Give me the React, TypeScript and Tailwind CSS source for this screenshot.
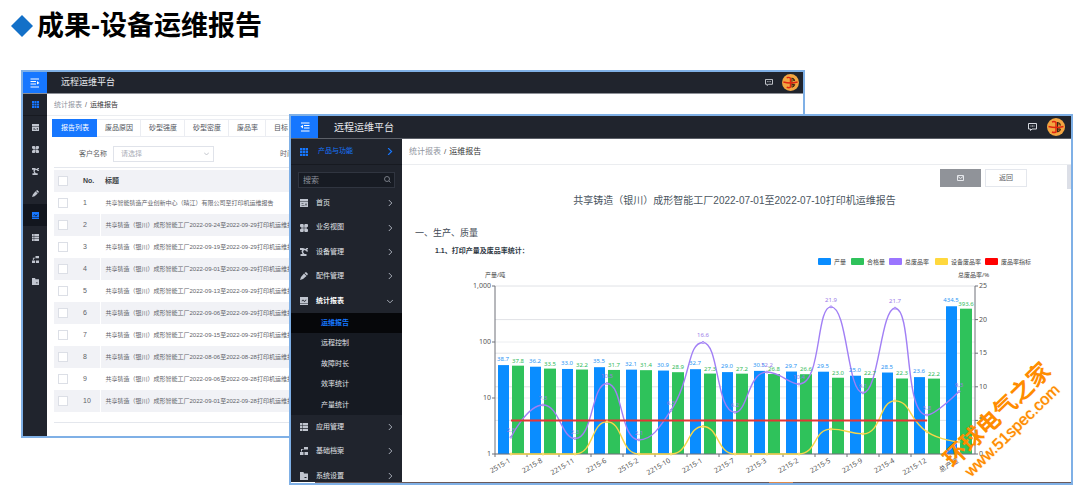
import React from 'react';

type IconName = 'apps' | 'home' | 'petals' | 'robot' | 'pencil' | 'report' | 'table' | 'blocks' | 'folder';

const Icon: React.FC<{ name: IconName; className?: string }> = ({ name, className }) => (
  <svg viewBox="0 0 16 16" fill="currentColor" className={className} aria-hidden="true">
    {name === 'apps' && (
      <path d="M0 0h4.6v4.6H0zM5.6 0h4.6v4.6H5.6zM11.3 0H16v4.6h-4.7zM0 5.6h4.6v4.6H0zM5.6 5.6h4.6v4.6H5.6zM11.3 5.6H16v4.6h-4.7zM0 11.3h4.6V16H0zM5.6 11.3h4.6V16H5.6zM11.3 11.3H16V16h-4.7z" />
    )}
    {name === 'home' && (
      <path fillRule="evenodd" d="M0 0h16v5H0zM0 6h16v10H0zM3 9v1h4V9zM3 12v1h6v-1zM11 9v4h2V9z" />
    )}
    {name === 'petals' && (
      <path d="M1 0h5l1.500 1.500v6H3L0 5V2zM10 0h5l1 2v3l-3 2.500H8.500v-6zM3 8.500h4.500v6L6 16H1l-1-2v-3zM8.500 8.500H13l3 2.500v3l-1 2h-5l-1.500-1.500z" />
    )}
    {name === 'robot' && (
      <path d="M0 0h6l5 2 2-2h3v2l-3 2 3 1v2h-3l-2-2-3-1-2 4 3 4h4v4H1v-4h4L3 7l1-3H0z" />
    )}
    {name === 'pencil' && <path d="M12 0l4 4-2 3-5-5zM8 3l5 5-7 6-6 2 2-6z" />}
    {name === 'report' && (
      <path fillRule="evenodd" d="M0 0h16v12H0zM0 13h16v3H0zM3 8l3-3 3 3 3-3 1 1-4 4-3-3-2 2z" />
    )}
    {name === 'table' && (
      <path d="M0 0h4v4.600H0zM5 0h11v4.600H5zM0 5.600h4v4.600H0zM5 5.600h11v4.600H5zM0 11.300h4V16H0zM5 11.300h11V16H5z" />
    )}
    {name === 'blocks' && <path d="M8 0h8v5H8zM2 4h5v1.500H4V9H2zM0 10h7v6H0zM9 10h7v6H9z" />}
    {name === 'folder' && <path fillRule="evenodd" d="M0 0h7l1 3h8v13H0zM9 10v2h4v-2z" />}
  </svg>
);

const FoldIcon: React.FC<{ open?: boolean }> = ({ open }) => (
  <svg viewBox="0 0 20 20" className="h-[10px] w-[10px]" fill="none" stroke="white" strokeWidth="2" aria-hidden="true">
    <path d={open ? 'M2 2h17M8 7h11M8 12h11M2 18h17' : 'M1 2h17M1 7h11M1 12h11M1 18h17'} />
    <path d={open ? 'M6 6v7L1 9z' : 'M14 6v7l5-3z'} fill="white" stroke="none" />
  </svg>
);

const MessageIcon: React.FC<{ className: string }> = ({ className }) => (
  <svg viewBox="0 0 18 16" className={className} fill="none" stroke="#d5d8de" strokeWidth="2" aria-hidden="true">
    <path d="M1 1h16v11H8l-3 3v-3H1z" />
    <path d="M5 6h2M8 6h2M11 6h2" />
  </svg>
);

const Avatar: React.FC<{ className: string }> = ({ className }) => (
  <svg viewBox="0 0 36 36" className={className} fill="none" role="img" aria-label="用户头像">
    <circle cx="18" cy="18" r="18" fill="#f2a541" />
    <path d="M21 8v20M21 9q6 0 6 6M24 10v5M21 22h6q0 5-6 6M24 21v5" stroke="#3d2412" strokeWidth="2" />
    <path d="M10 8q5-2 8 1v19q-4 2-8 0M3 17q15 4 30 0" stroke="#e0260f" strokeWidth="3" />
  </svg>
);

const Chevron: React.FC<{ down?: boolean; className: string }> = ({ down, className }) => (
  <svg viewBox="0 0 10 10" className={className} fill="none" stroke="currentColor" strokeWidth="1.6" aria-hidden="true">
    <path d={down ? 'M0 3l5 5 5-5' : 'M3 0l5 5-5 5'} />
  </svg>
);

const railIcons: IconName[] = ['home', 'petals', 'robot', 'pencil', 'report', 'table', 'blocks', 'folder'];

const tabs = ['报告列表', '废品原因', '砂型强度', '砂型密度', '废品率', '目标'];

const reports = [
  '共享智能铸造产业创新中心（晴江）有限公司至打印机运维报告',
  '共享铸造（银川）成形智能工厂2022-09-24至2022-09-29打印机运维报告',
  '共享铸造（银川）成形智能工厂2022-09-19至2022-09-29打印机运维报告',
  '共享铸造（银川）成形智能工厂2022-09-01至2022-09-29打印机运维报告',
  '共享铸造（银川）成形智能工厂2022-09-13至2022-09-29打印机运维报告',
  '共享铸造（银川）成形智能工厂2022-09-06至2022-09-29打印机运维报告',
  '共享铸造（银川）成形智能工厂2022-09-15至2022-09-29打印机运维报告',
  '共享铸造（银川）成形智能工厂2022-08-06至2022-08-28打印机运维报告',
  '共享铸造（银川）成形智能工厂2022-09-06至2022-09-28打印机运维报告',
  '共享铸造（银川）成形智能工厂2022-09-01至2022-09-28打印机运维报告',
];

const checkboxClass = 'block h-[10px] w-[10px] appearance-none border border-[#dcdfe6] bg-white';

const ListWindow: React.FC = () => (
  <section className="ml-[21px] mr-[275px] overflow-hidden border-2 border-[#7fb0e6] bg-white">
    <header className="flex h-[22px] items-center border-b border-[#8d9097] bg-[#20242d]">
      <button type="button" aria-label="展开菜单" className="flex h-full w-6 items-center justify-center bg-[#1677ff]">
        <FoldIcon />
      </button>
      <span className="ml-[14px] flex-1 text-[9px] text-[#e6e8ec]">远程运维平台</span>
      <MessageIcon className="mr-[9px] h-[7px] w-2" />
      <Avatar className="mr-1 h-[17px] w-[17px]" />
    </header>
    <div className="flex">
      <nav className="flex w-6 shrink-0 flex-col bg-[#20242d] text-[#c0c5cf]">
        <a href="#apps" aria-label="产品与功能" className="flex h-[22px] items-center justify-center border-b border-[#171a21] text-[#1677ff]">
          <Icon name="apps" className="h-[7px] w-[7px]" />
        </a>
        {railIcons.map((name) => (
          <a
            key={name}
            href={`#${name}`}
            aria-label={name}
            className={`flex h-[22px] items-center justify-center ${name === 'report' ? 'bg-[#12161e] text-[#1677ff]' : ''}`}
          >
            <Icon name={name} className="h-[7px] w-[7px]" />
          </a>
        ))}
      </nav>
      <main className="min-w-0 flex-1 pb-[13px]">
        <div className="flex h-[22px] items-center gap-[3px] border-b border-[#ebedf0] pl-[7px] pt-[2px] text-[7px]">
          <a href="#stats" className="text-[#8f949e]">统计报表</a>
          <span className="text-[#555]">/</span>
          <span className="text-[#333]">运维报告</span>
        </div>
        <div className="ml-[5px] mt-[3px] flex">
          {tabs.map((tab, i) => (
            <button
              key={tab}
              type="button"
              className={`h-[18px] shrink-0 border pl-2 pr-[7px] text-[7px] ${
                i === 0 ? 'border-[#1677ff] bg-[#1677ff] text-white' : 'border-l-0 border-[#ebedf2] text-[#50545c]'
              }`}
            >
              {tab}
            </button>
          ))}
        </div>
        <form className="ml-[7px] flex h-[31px] items-center border-b border-[#e4e7ed] pl-[25px] pt-1 text-[7px] text-[#606266]">
          <label htmlFor="customer">客户名称</label>
          <div className="relative ml-[6px]">
            <select id="customer" className="block h-4 w-[101px] appearance-none border border-[#e0e3ea] bg-white px-[7px] text-[7px] text-[#a9adb6]">
              <option>请选择</option>
            </select>
            <Chevron down className="absolute right-[5px] top-[5px] h-[5px] w-[5px] text-[#b4b8c0]" />
          </div>
          <span className="ml-[66px]">时间</span>
        </form>
        <div className="ml-[7px] border-b border-[#e4e7ed] pb-[10px] pt-[2px]">
          <table className="w-full table-fixed border-collapse text-left text-[6px] text-[#5f6369]">
            <thead>
              <tr className="h-[22px] bg-[#f1f2f6] text-[7px] text-[#3c3f45]">
                <th className="w-[29px] p-0 pl-1">
                  <input type="checkbox" aria-label="全选" className={checkboxClass} />
                </th>
                <th className="w-[17px] p-0">No.</th>
                <th className="p-0 pl-[5px]">标题</th>
              </tr>
            </thead>
            <tbody>
              {reports.map((title, i) => (
                <tr key={title} className="h-[22px] even:bg-[#f1f2f6]">
                  <td className="p-0 pl-1">
                    <input type="checkbox" aria-label={`选择第${i + 1}行`} className={checkboxClass} />
                  </td>
                  <td className="border-r border-white p-0 text-[7px]">{i + 1}</td>
                  <td className="whitespace-nowrap p-0 pl-[5px]">{title}</td>
                </tr>
              ))}
            </tbody>
          </table>
        </div>
      </main>
    </div>
  </section>
);

const topMenu: { icon: IconName; label: string; open?: boolean }[] = [
  { icon: 'home', label: '首页' },
  { icon: 'petals', label: '业务视图' },
  { icon: 'robot', label: '设备管理' },
  { icon: 'pencil', label: '配件管理' },
  { icon: 'report', label: '统计报表', open: true },
];

const subMenu = ['运维报告', '远程控制', '故障时长', '效率统计', '产量统计'];

const bottomMenu: { icon: IconName; label: string; open?: boolean }[] = [
  { icon: 'table', label: '应用管理' },
  { icon: 'blocks', label: '基础档案' },
  { icon: 'folder', label: '系统设置' },
];

const MenuItem: React.FC<{ icon: IconName; label: string; open?: boolean }> = ({ icon, label, open }) => (
  <a href={`#${icon}`} className={`flex items-center pl-[9px] pr-[9px] ${open ? 'font-bold text-white' : ''}`}>
    <Icon name={icon} className="mr-2 h-2 w-2 text-[#c0c5cf]" />
    <span className="flex-1">{label}</span>
    <Chevron down={open} className="h-[6px] w-[6px] text-[#aeb3bd]" />
  </a>
);

const Sidebar: React.FC = () => (
  <aside className="h-0 min-h-full overflow-hidden bg-[#20242d] text-[7px] text-[#e2e4e9]">
    <a href="#apps" className="flex h-[26px] items-center border-b border-[#171a21] pl-[9px] pr-[9px] text-[#1677ff]">
      <Icon name="apps" className="mr-[10px] h-2 w-2" />
      <span className="flex-1">产品与功能</span>
      <Chevron className="h-[7px] w-[7px]" />
    </a>
    <div className="relative mx-[7px] mb-[3px] mt-[7px]">
      <input
        type="search"
        aria-label="搜索"
        placeholder="搜索"
        className="block h-4 w-full border border-[#303540] bg-[#171b23] px-1 text-[8px] placeholder:text-[#8d929c]"
      />
      <svg viewBox="0 0 14 14" className="absolute right-1 top-1 h-[7px] w-[7px]" fill="none" stroke="#8d929c" strokeWidth="1.6" aria-hidden="true">
        <circle cx="6" cy="6" r="5" />
        <path d="M10 10l3 3" />
      </svg>
    </div>
    <div className="grid h-[122px] auto-rows-fr">
      {topMenu.map((item) => (
        <MenuItem key={item.label} {...item} />
      ))}
    </div>
    <div className="grid h-[102px] auto-rows-fr bg-[#161a22]">
      {subMenu.map((label, i) => (
        <a
          key={label}
          href={`#sub-${i}`}
          className={`flex items-center pl-[30px] ${i === 0 ? 'bg-[#06070a] font-bold text-[#1677ff]' : ''}`}
        >
          {label}
        </a>
      ))}
    </div>
    <div className="grid h-[73px] auto-rows-fr">
      {bottomMenu.map((item) => (
        <MenuItem key={item.label} {...item} />
      ))}
    </div>
  </aside>
);

const machines = [
  '2515-1', '2215-8', '2215-11', '2215-6', '2515-2', '2215-10', '2215-1', '2215-7',
  '2215-3', '2215-2', '2215-5', '2215-9', '2215-4', '2215-12', '总产量',
];
const output = [38.7, 36.2, 33.0, 35.5, 32.1, 30.9, 32.7, 29.0, 30.5, 29.7, 29.5, 25.0, 28.5, 23.6, 434.5];
const qualified = [37.8, 33.5, 32.2, 31.7, 31.4, 28.9, 27.3, 27.2, 26.8, 26.6, 23.0, 22.7, 22.3, 22.2, 393.6];
const scrapRate = [2.5, 7.3, 2.3, 10.5, 2.1, 6.5, 16.6, 6.2, 12.2, 10.4, 21.9, 9.1, 21.7, 5.8, 9.3];
const deviceScrap = [0, 0, 0, 4.8, 0, 0, 4.1, 0, 0, 0, 3.7, 3.0, 7.9, 3.3, 1.8];

const LEFT = 93;
const RIGHT = 573;
const TOP = 32;
const BOTTOM = 200;
const STEP = (RIGHT - LEFT) / machines.length;

const logY = (v: number) => BOTTOM - (Math.log10(v) * (BOTTOM - TOP)) / 3;
const rateY = (v: number) => BOTTOM - (v * (BOTTOM - TOP)) / 25;
const centerX = (i: number) => LEFT + STEP * (i + 0.5);

const clamp = (v: number, a: number, b: number) => Math.max(Math.min(a, b), Math.min(Math.max(a, b), v));

// Smoothed line; control points never leave the box of their segment.
const smoothPath = (values: number[]) => {
  const pts = values.map((v, i) => [centerX(i), rateY(v)]);
  let out = pts[0];
  let d = `M${pts[0].join(' ')}`;
  for (let i = 1; i < pts.length; i++) {
    const prev = pts[i - 1];
    const cur = pts[i];
    const next = pts[i + 1];
    let inn = cur;
    let nextOut = cur;
    if (next) {
      const lp = Math.hypot(cur[0] - prev[0], cur[1] - prev[1]);
      const ln = Math.hypot(next[0] - cur[0], next[1] - cur[1]);
      const ratio = ln / (ln + lp);
      nextOut = [0, 1].map((k) => clamp(cur[k] + (next[k] - prev[k]) * 0.5 * ratio, next[k], cur[k]));
      inn = [0, 1].map((k) => clamp(cur[k] - ((nextOut[k] - cur[k]) * lp) / ln, prev[k], cur[k]));
      nextOut = [0, 1].map((k) => cur[k] + ((cur[k] - inn[k]) * ln) / lp);
    }
    d += `C${out.join(' ')} ${inn.join(' ')} ${cur.join(' ')}`;
    out = nextOut;
  }
  return d;
};

const legend = [
  { label: '产量', color: '#0a8dff', x: 417 },
  { label: '合格量', color: '#2fc25b', x: 450 },
  { label: '总废品率', color: '#9b75ff', x: 488 },
  { label: '设备废品率', color: '#ffd83d', x: 534 },
  { label: '废品率指标', color: '#ff0000', x: 584 },
];

const Chart: React.FC = () => (
  <svg viewBox="0 3 669 225" className="block w-full font-['Noto_Sans','Noto_Sans_CJK_SC',sans-serif]" role="img" aria-label="打印产量及废品率统计">
    <g fontSize="6" fill="#444">
      {legend.map(({ label, color, x }) => (
        <g key={label}>
          <rect x={x - 1} y="4" width="13" height="7" rx="1" fill={color} />
          <text x={x + 15} y="10">{label}</text>
        </g>
      ))}
      <text x="83" y="23">产量/吨</text>
      <text x="556" y="23">总废品率/%</text>
    </g>

    <g stroke="#e0e2e6">
      {[0, 5, 10, 15, 20, 25].map((v) => (
        <path key={v} d={`M${LEFT} ${rateY(v)}H${RIGHT}`} />
      ))}
      <path d={`M${LEFT} ${logY(10)}H${RIGHT}M${LEFT} ${logY(100)}H${RIGHT}`} stroke="#eceef1" />
    </g>

    {machines.map((name, i) => (
      <g key={name}>
        <rect x={LEFT + STEP * i + 3} y={logY(output[i])} width="11" height={BOTTOM - logY(output[i])} fill="#0a8dff" />
        <rect x={LEFT + STEP * i + 17} y={logY(qualified[i])} width="12" height={BOTTOM - logY(qualified[i])} fill="#2fc25b" />
      </g>
    ))}

    <g stroke="#6e7079" fill="none">
      <path d={`M${LEFT} ${TOP}V${BOTTOM}H${RIGHT}V${TOP}`} />
      {[1, 10, 100, 1000].map((v) => (
        <path key={v} d={`M${LEFT - 3} ${logY(v)}H${LEFT}`} />
      ))}
      {[0, 5, 10, 15, 20, 25].map((v) => (
        <path key={v} d={`M${RIGHT} ${rateY(v)}h3`} />
      ))}
      {machines.map((name, i) => (
        <path key={name} d={`M${LEFT + STEP * i} ${BOTTOM}v3`} />
      ))}
    </g>

    <path d={smoothPath(scrapRate)} fill="none" stroke="#a17ff5" strokeWidth="1.4" />
    <path d={smoothPath(deviceScrap)} fill="none" stroke="#f7d649" strokeWidth="1.4" />
    <path d={`M${centerX(0)} ${rateY(5)}H${centerX(13)}`} stroke="#e53535" strokeWidth="2" />
    <g fill="white">
      {scrapRate.map((v, i) => (
        <circle key={i} cx={centerX(i)} cy={rateY(v)} r="1" stroke="#a17ff5" />
      ))}
      {deviceScrap.map((v, i) => (
        <circle key={i} cx={centerX(i)} cy={rateY(v)} r="1" stroke="#f7d649" />
      ))}
    </g>

    <g fontSize="6" textAnchor="middle">
      {machines.map((name, i) => (
        <g key={name}>
          <text x={LEFT + STEP * i + 8} y={logY(output[i]) - 4} fill="#2b96f5">{output[i].toFixed(1)}</text>
          <text x={LEFT + STEP * i + 23} y={logY(qualified[i]) - 3} fill="#2fbb5a">{qualified[i].toFixed(1)}</text>
          <text x={centerX(i)} y={rateY(scrapRate[i]) - 5} fill="#9b7be8">{scrapRate[i].toFixed(1)}</text>
        </g>
      ))}
    </g>

    <g fontSize="7" fill="#555">
      {[1, 10, 100, 1000].map((v) => (
        <text key={v} x={LEFT - 4} y={logY(v) + 2} textAnchor="end">{v.toLocaleString('en-US')}</text>
      ))}
      {[0, 5, 10, 15, 20, 25].map((v) => (
        <text key={v} x={RIGHT + 4} y={rateY(v) + 2}>{v}</text>
      ))}
      {machines.map((name, i) => (
        <text key={name} textAnchor="end" transform={`translate(${centerX(i)} ${BOTTOM + 8}) rotate(-30)`}>{name}</text>
      ))}
    </g>
  </svg>
);

const ReportWindow: React.FC = () => (
  <section className="absolute left-[289px] right-[7px] top-[114px] overflow-hidden border-2 border-[#7fb0e6] bg-white">
    <header className="flex h-[23px] items-center border-b border-[#5c6068] bg-[#20242d]">
      <button type="button" aria-label="收起菜单" className="flex h-full w-[27px] items-center justify-center bg-[#1677ff]">
        <FoldIcon open />
      </button>
      <span className="ml-4 flex-1 text-[10px] text-[#e6e8ec]">远程运维平台</span>
      <MessageIcon className="mr-[10px] h-2 w-[9px]" />
      <Avatar className="mr-[6px] h-[18px] w-[18px]" />
    </header>
    <div className="grid grid-cols-[111px_minmax(0,1fr)]">
      <Sidebar />
      <main>
        <div className="flex h-[26px] items-center gap-[3px] border-b border-[#ebedf0] pl-[7px] text-[8px]">
          <a href="#stats" className="text-[#8f949e]">统计报表</a>
          <span className="text-[#555]">/</span>
          <span className="text-[#333]">运维报告</span>
        </div>
        <div className="flex">
          <div className="min-w-0 flex-1">
            <div className="flex justify-end gap-1 pr-10 pt-1">
              <button type="button" aria-label="发送邮件" className="flex h-[18px] w-[41px] items-center justify-center bg-[#909399]">
                <svg viewBox="0 0 14 12" className="h-[6px] w-[7px]" fill="none" stroke="#e6e8ec" strokeWidth="2" aria-hidden="true">
                  <path d="M1 1h12v10H1zM2 3l5 4 5-4" />
                </svg>
              </button>
              <button type="button" className="h-[18px] w-[42px] border border-[#e4e7ed] text-[7px] text-[#606266]">返回</button>
            </div>
            <h2 className="mt-[6px] text-center text-[10px] leading-4 text-[#4a5560]">
              共享铸造（银川）成形智能工厂2022-07-01至2022-07-10打印机运维报告
            </h2>
            <h3 className="mt-4 pl-[13px] text-[9px] leading-4 text-[#3f4a55]">一、生产、质量</h3>
            <h4 className="mt-1 pl-[33px] text-[7px] font-bold leading-3 text-[#2f3944]">1.1、打印产量及废品率统计：</h4>
          </div>
          <div className="h-6 w-1 bg-[#dcdfe7]" />
        </div>
        <Chart />
      </main>
    </div>
    <div className="ml-6 flex h-px bg-[#6b5a5a]">
      <div className="ml-[60%] w-6 bg-[#e08a4a]" />
    </div>
    <div className="absolute -right-2 bottom-[39px] w-[150px] -rotate-44 text-center text-[#ff8c00]">
      <div className="whitespace-nowrap text-[23px] font-bold leading-6">环球电气之家</div>
      <a href="#source" className="block whitespace-nowrap text-[16px] leading-5 [text-shadow:0_0_1px_currentColor]">
        www.51spec.com
      </a>
    </div>
  </section>
);

const App: React.FC = () => (
  <div className="relative min-w-[800px] bg-white pb-[55px] font-['Liberation_Sans','Noto_Sans_CJK_SC',sans-serif]">
    <h1 className="flex h-[52px] items-center gap-1 pl-[11px] text-[27px] font-bold text-black">
      <svg viewBox="0 0 22 22" className="h-[22px] w-[22px]" aria-hidden="true">
        <path d="M11 0l11 11-11 11L0 11z" fill="#1370c8" />
      </svg>
      成果-设备运维报告
    </h1>
    <div className="pt-[18px]">
      <ListWindow />
    </div>
    <ReportWindow />
  </div>
);

export default App;
